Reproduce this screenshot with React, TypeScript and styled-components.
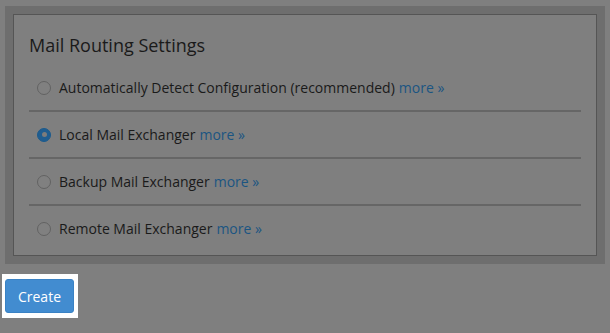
import React from "react";
import styled, { createGlobalStyle } from "styled-components";

const Global = createGlobalStyle`
  html, body { margin: 0; padding: 0; background: #7f7f7f; }
  body { font-family: "Open Sans", "Liberation Sans", sans-serif; }
`;

const Page = styled.div`
  padding: 6px 0 0 5px;
  width: 600px;
`;

const Frame = styled.div`
  background: #6e6e6e;
  padding: 8px;
`;

const Panel = styled.fieldset`
  margin: 0;
  border: 1px solid #555555;
  background: #7f7f7f;
  padding: 18px 15px 4px 15px;
  display: flex;
  flex-direction: column;
`;

const Title = styled.legend`
  float: left;
  width: 100%;
  padding: 0;
  margin: 0 0 8px 0;
  font-size: 18px;
  line-height: 24px;
  color: #1a1a1a;
`;

const Option = styled.label<{ $last?: boolean }>`
  display: flex;
  align-items: center;
  gap: 8px;
  height: 45px;
  padding-left: 8px;
  border-bottom: ${(p) => (p.$last ? "none" : "2px solid #666666")};
  font-size: 14px;
  color: #1a1a1a;
`;

const Radio = styled.span<{ $checked?: boolean }>`
  box-sizing: border-box;
  width: 14px;
  height: 14px;
  border-radius: 50%;
  flex: none;
  border: 1px solid ${(p) => (p.$checked ? "#1c5a8c" : "#626262")};
  background: ${(p) => (p.$checked ? "#1f5d90" : "#808080")};
  display: flex;
  align-items: center;
  justify-content: center;
  &::after {
    content: "";
    display: ${(p) => (p.$checked ? "block" : "none")};
    width: 5px;
    height: 5px;
    border-radius: 50%;
    background: #7c7c7c;
  }
`;

const More = styled.a`
  color: #1b5582;
  text-decoration: none;
  margin-left: 4px;
`;

const Highlight = styled.div`
  display: inline-block;
  background: #ffffff;
  margin: 10px 0 0 -3px;
  padding: 5px 4px 5px 3px;
`;

const Button = styled.button`
  box-sizing: border-box;
  width: 69px;
  height: 34px;
  border: 1px solid #3a82c4;
  border-radius: 3px;
  background: #428cd0;
  color: #ffffff;
  font-family: "Open Sans", "Liberation Sans", sans-serif;
  font-size: 14px;
  padding: 0;
  display: block;
`;

const options = [
  { label: "Automatically Detect Configuration (recommended)", checked: false },
  { label: "Local Mail Exchanger", checked: true },
  { label: "Backup Mail Exchanger", checked: false },
  { label: "Remote Mail Exchanger", checked: false },
];

export default function App() {
  return (
    <>
      <Global />
      <Page>
        <Frame>
          <Panel>
            <Title>Mail Routing Settings</Title>
            {options.map((o, i) => (
              <Option key={o.label} $last={i === options.length - 1}>
                <Radio $checked={o.checked} />
                <span>
                  {o.label}
                  <More href="#">more »</More>
                </span>
              </Option>
            ))}
          </Panel>
        </Frame>
        <Highlight>
          <Button>Create</Button>
        </Highlight>
      </Page>
    </>
  );
}
